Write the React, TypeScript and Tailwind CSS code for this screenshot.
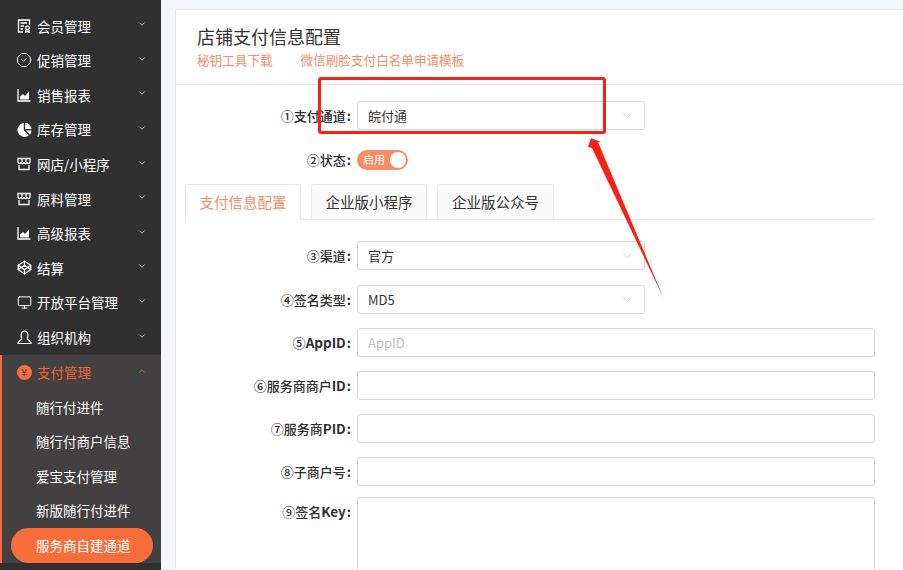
import React from 'react';
import { ChevronDown, ChevronUp, CircleCheck, Monitor, Codepen } from 'lucide-react';

const font = { fontFamily: '"Noto Sans CJK SC", "Liberation Sans", sans-serif' };

function Receipt() {
  return (
    <svg width="14" height="14" viewBox="0 0 14 14" fill="none" stroke="#fff" strokeWidth="1.3">
      <path d="M12.5 6V1H1.500V13H6" />
      <path d="M3.500 4H10M3.500 7H7M3.500 10H6" />
      <circle cx="10.500" cy="9" r="1.800" />
      <path d="M9 11L8.500 13.500L10.500 12.500L12.500 13.500L12 11" />
    </svg>
  );
}

function AreaChart() {
  return (
    <svg width="14" height="14" viewBox="0 0 14 14" fill="none">
      <path d="M1 1V13H13.500" stroke="#fff" strokeWidth="1.300" />
      <path d="M3 11.500V8.500L6 6L8 8L12 3.500V11.500Z" fill="#fff" />
    </svg>
  );
}

function Pie() {
  return (
    <svg width="15" height="15" viewBox="0 0 15 15" fill="#fff">
      <path d="M6.800 1V8.200L12 13.300A7 7 0 1 1 6.800 1Z" />
      <path d="M8.200 0.800A6.800 6.800 0 0 1 14.500 7H8.200Z" />
      <path d="M8.800 8.400H14.500A6.800 6.800 0 0 1 13 12.400Z" />
    </svg>
  );
}

function Shop() {
  return (
    <svg width="14" height="14" viewBox="0 0 14 14" fill="none" stroke="#fff" strokeWidth="1.300">
      <path d="M1 1.500H13V5C13 7 10 7 10 5C10 7 7 7 7 5C7 7 4 7 4 5C4 7 1 7 1 5Z" />
      <path d="M5 1.500V5M9 1.500V5" />
      <path d="M2 8V12.500H12V8" />
    </svg>
  );
}

function Person() {
  return (
    <svg width="15" height="15" viewBox="0 0 15 15" fill="none" stroke="#fff" strokeWidth="1.200">
      <path d="M5 8.500C3.500 6.500 3.500 1 7.500 1C11.500 1 11.500 6.500 10 8.500" />
      <path d="M5 8.500C4.500 10.500 1 10.500 1 13.500H14C14 10.500 10.500 10.500 10 8.500" />
    </svg>
  );
}

function Yuan() {
  return (
    <div className="w-[15px] h-[15px] rounded-full bg-[#f96d3a] flex items-center justify-center text-[10px] leading-none text-[#433f40]">
      ¥
    </div>
  );
}

const menus = [
  { name: '会员管理', icon: <Receipt /> },
  { name: '促销管理', icon: <CircleCheck size={16} strokeWidth={1.400} /> },
  { name: '销售报表', icon: <AreaChart /> },
  { name: '库存管理', icon: <Pie /> },
  { name: '网店/小程序', icon: <Shop /> },
  { name: '原料管理', icon: <Shop /> },
  { name: '高级报表', icon: <AreaChart /> },
  { name: '结算', icon: <Codepen size={15} strokeWidth={2} /> },
  { name: '开放平台管理', icon: <Monitor size={15} strokeWidth={1.600} /> },
  { name: '组织机构', icon: <Person /> },
];

const subMenus = ['随行付进件', '随行付商户信息', '爱宝支付管理', '新版随行付进件'];

function Sidebar() {
  return (
    <div className="w-[161px] h-full shrink-0 bg-[#303030] pt-[8.500px] text-[13.500px] text-white overflow-hidden">
      {menus.map((m) => (
        <div key={m.name} className="h-[34.600px] flex items-center pl-[16px] pr-[14px]">
          <div className="w-[16px] flex justify-center">{m.icon}</div>
          <span className="ml-[5px] flex-1">{m.name}</span>
          <ChevronDown size={10} strokeWidth={2} className="-mt-[3px] text-[#cfd3d6]" />
        </div>
      ))}
      <div className="bg-[#434041] border-l-2 border-[#f96d3a] h-[208px] mt-[0.500px]">
        <div className="h-[34.600px] flex items-center pl-[14px] pr-[14px]">
          <div className="w-[16px] flex justify-center"><Yuan /></div>
          <span className="ml-[5px] flex-1 text-[#f4603a]">支付管理</span>
          <ChevronUp size={10} strokeWidth={2} className="-mt-[3px] text-[#f4603a]" />
        </div>
        {subMenus.map((s) => (
          <div key={s} className="h-[34.600px] flex items-center pl-[34px]">{s}</div>
        ))}
        <div className="ml-[9px] w-[142px] h-[35px] rounded-full bg-[#f96d3a] flex items-center pl-[25px]">
          服务商自建通道
        </div>
      </div>
    </div>
  );
}

function Field({ label, children, className }: { label: React.ReactNode; children: React.ReactNode; className?: string }) {
  return (
    <div className={`flex ${className ?? ''}`}>
      <div className="w-[176px] pr-[6px] h-[29px] flex items-center justify-end font-medium text-[13px] text-[#303030]">
        {label}
        <b className="ml-[1px]">:</b>
      </div>
      {children}
    </div>
  );
}

function Select({ value }: { value: string }) {
  return (
    <div className="w-[288px] h-[29px] border border-[#d9d9d9] rounded-[3px] flex items-center pl-[10px] pr-[9px] text-[13px] text-[#333]">
      <span className="flex-1">{value}</span>
      <ChevronDown size={15} strokeWidth={1.100} className="text-[#bdbdbd]" />
    </div>
  );
}

function Input({ placeholder }: { placeholder?: string }) {
  return (
    <div className="w-[518px] h-[29px] border border-[#d9d9d9] rounded-[3px] flex items-center pl-[10px] text-[13px] text-[#bfbfbf]">
      {placeholder}
    </div>
  );
}

function Content() {
  return (
    <div className="flex-1 min-w-0 bg-[#f5f6fa] pl-[14px] pt-[9px] h-full overflow-hidden">
      <div className="bg-white border-l border-t border-[#e8e8e8] h-[600px]">
        <div className="h-[75px] border-b border-[#e8e8e8] pl-[21px] pt-[15px]">
          <div className="text-[18px] leading-[22px] text-[#333]">店铺支付信息配置</div>
          <div className="mt-[4px] flex gap-[28px] text-[12.600px] leading-[18px] text-[#fb8d66]">
            <span>秘钥工具下载</span>
            <span>微信刷脸支付白名单申请模板</span>
          </div>
        </div>
        <div className="pl-[5px] pt-[16px]">
          <Field label="①支付通道">
            <Select value="皖付通" />
          </Field>
          <Field label="②状态" className="mt-[15px] -mb-[1px]">
            <div className="h-[29px] flex items-center">
              <div className="w-[51px] h-[20px] rounded-full bg-[#fb8d66] flex items-center justify-between pl-[6px] pr-[2px] text-[11px] text-white">
                启用
                <div className="w-[16px] h-[16px] rounded-full bg-white" />
              </div>
            </div>
          </Field>
          <div className="w-[690px] ml-[4px] mt-[11px] h-[36px] border-b border-[#e8e8e8] flex gap-[10px] text-[14.500px]">
            <div className="w-[116px] h-[36px] border border-[#e8e8e8] border-b-white rounded-t-[3px] bg-white text-[#fb8d66] flex items-center justify-center">
              支付信息配置
            </div>
            <div className="w-[116px] h-[35px] border border-[#e8e8e8] border-b-0 rounded-t-[3px] bg-[#fafafa] text-[#333] flex items-center justify-center">
              企业版小程序
            </div>
            <div className="w-[117px] h-[35px] border border-[#e8e8e8] border-b-0 rounded-t-[3px] bg-[#fafafa] text-[#333] flex items-center justify-center">
              企业版公众号
            </div>
          </div>
          <Field label="③渠道" className="mt-[21px]"><Select value="官方" /></Field>
          <Field label="④签名类型" className="mt-[15px]"><Select value="MD5" /></Field>
          <Field label={<>⑤<b className="text-[13.500px]">AppID</b></>} className="mt-[14px]"><Input placeholder="AppID" /></Field>
          <Field label={<>⑥服务商商户<b className="text-[13.500px]">ID</b></>} className="mt-[14px]"><Input /></Field>
          <Field label={<>⑦服务商<b className="text-[13.500px]">PID</b></>} className="mt-[14px]"><Input /></Field>
          <Field label="⑧子商户号" className="mt-[14px]"><Input /></Field>
          <Field label={<>⑨签名<b className="text-[13.500px]">Key</b></>} className="mt-[11px]">
            <div className="w-[518px] h-[100px] border border-[#d9d9d9] rounded-[3px]" />
          </Field>
        </div>
      </div>
    </div>
  );
}

export default function App() {
  return (
    <div className="relative w-[903px] h-[570px] flex overflow-hidden" style={font}>
      <Sidebar />
      <Content />
      {/* annotation drawn over the screenshot */}
      <div className="absolute left-[318px] top-[77px] w-[288px] h-[57px] border-[3px] border-[#fb1f14] rounded-[3px]" />
      <svg className="absolute left-[580px] top-[130px]" width="95" height="180" viewBox="0 0 95 180">
        <path d="M11 8L21 12L18 12L84 169L12 18L8 17Z" fill="#fb1f14" />
      </svg>
    </div>
  );
}
